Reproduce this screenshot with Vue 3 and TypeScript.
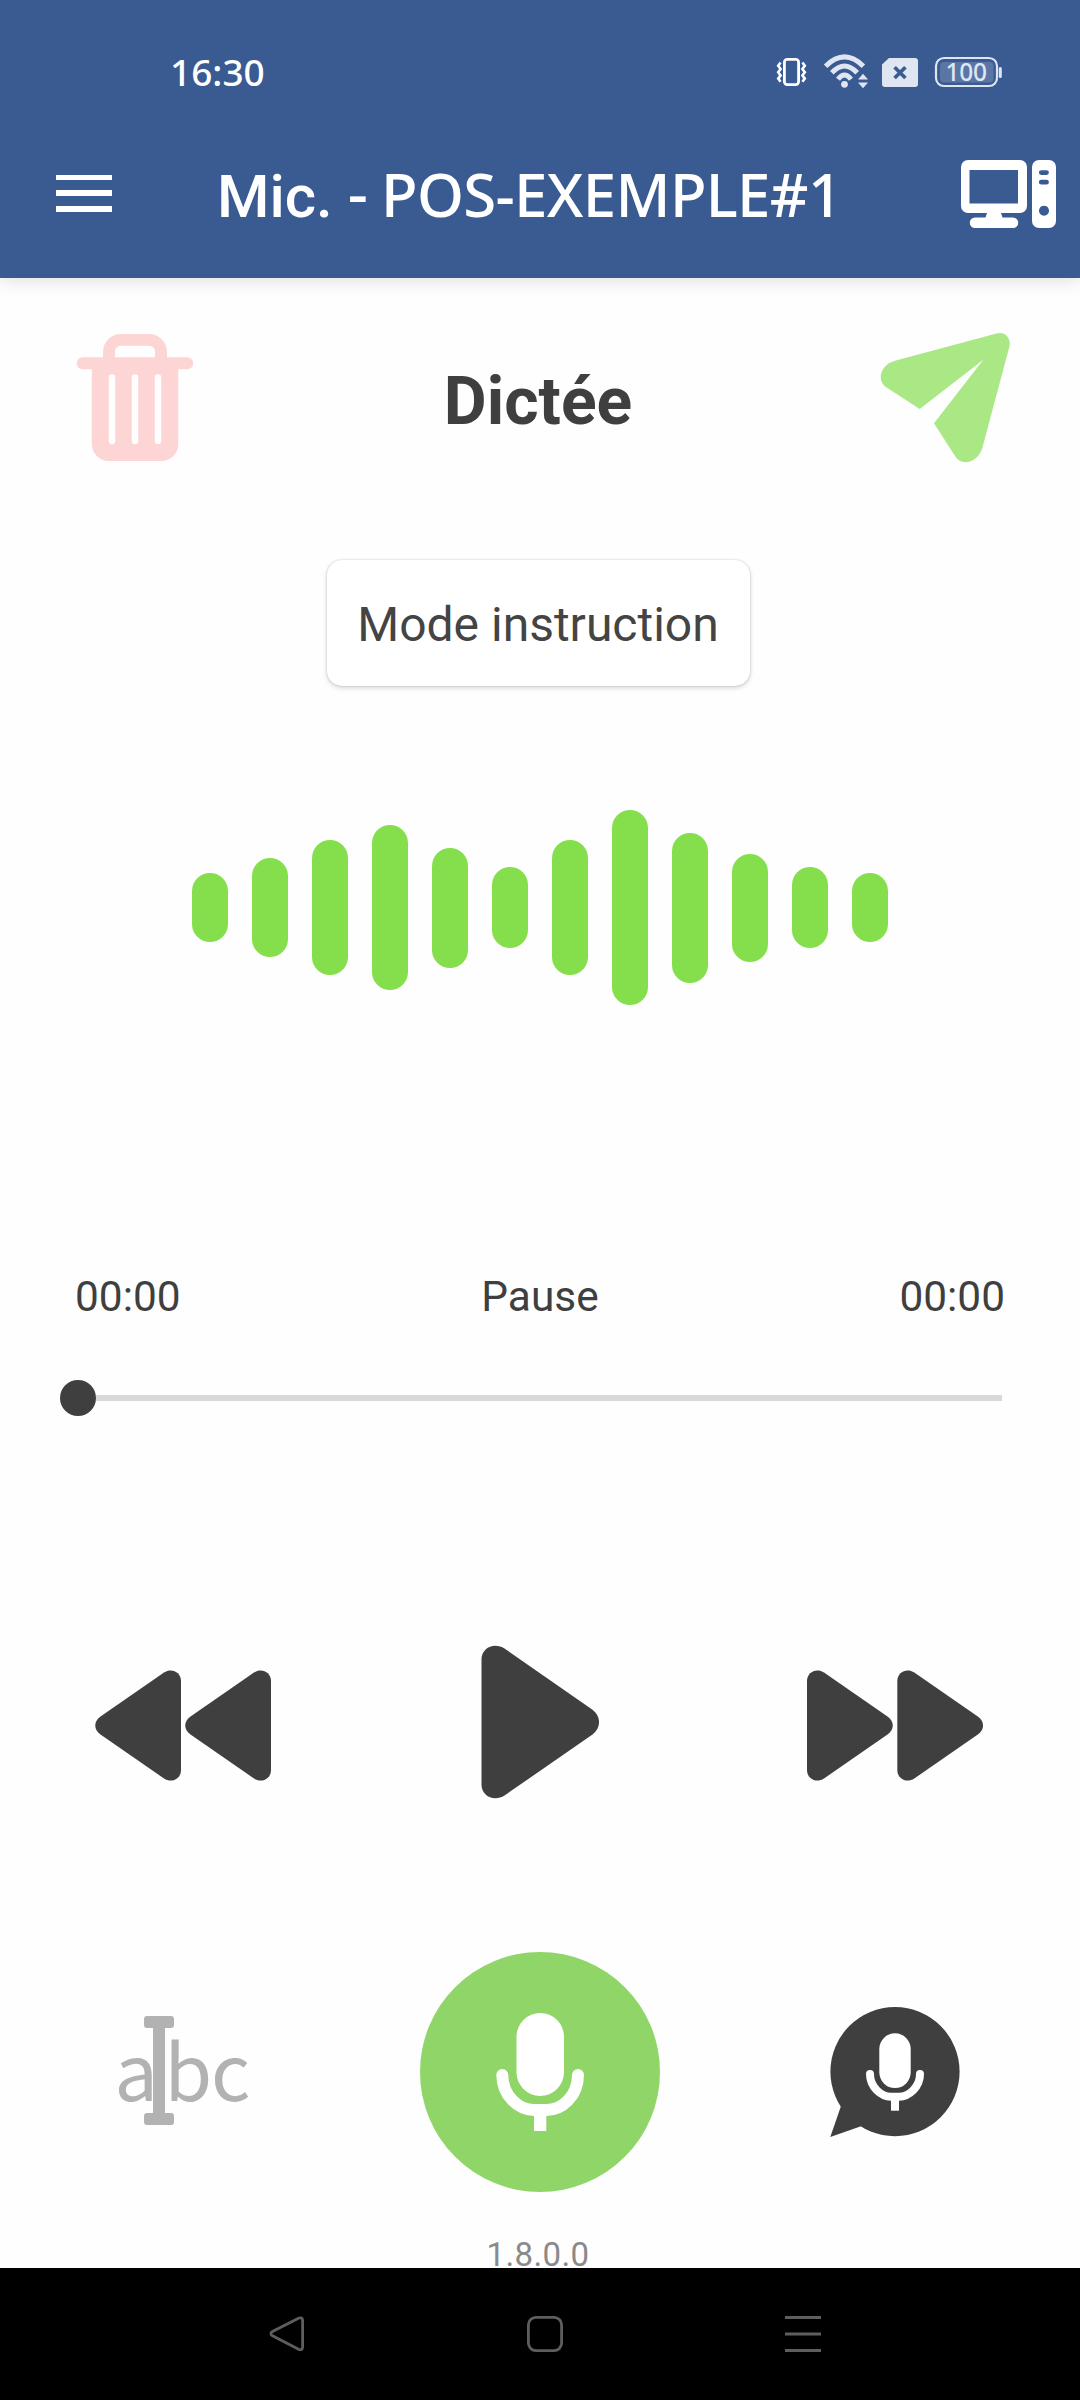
<script setup lang="ts">
import { ref } from 'vue'

const bars: number[] = [69, 99, 135, 165, 120, 81, 135, 195, 150, 108, 81, 69]
const position = ref('00:00')
const duration = ref('00:00')
const state = ref('Pause')
</script>

<template>
  <div class="screen">
    <header class="header">
      <div class="status">
        <span class="clock">16:30</span>
        <svg class="status-icons" viewBox="770 50 240 44" width="240" height="44">
          <g fill="none" stroke="#fff">
            <rect x="784.4" y="59.4" width="14.2" height="25.2" rx="2.8" stroke-width="2.8" />
            <path d="M780.6 62.5l-2.4 3.3 2.4 3.2-2.4 3.2 2.4 3.2-2.4 3.2 2.4 3.2M802.4 62.5l2.4 3.3-2.4 3.2 2.4 3.2-2.4 3.2 2.4 3.2-2.4 3.2" stroke-width="2.6" />
          </g>
          <g fill="none" stroke="#dfe5f1" stroke-width="5">
            <path d="M825.6 66.2Q844.5 47.6 863.4 66.2" />
            <path d="M831.8 72.8Q844.5 59 857.2 72.8" />
            <path d="M838 79.2Q844.5 70.6 851 79.2" />
          </g>
          <g fill="#dfe5f1">
            <circle cx="844.5" cy="84.3" r="3.4" />
            <path d="M858 79.6l5-5.8 5 5.8zM858 82.4h10l-5 5.8z" />
            <path d="M889 58h26a3 3 0 0 1 3 3v23a3 3 0 0 1-3 3h-30a3 3 0 0 1-3-3V64.6z" />
            <rect x="998.8" y="67" width="3" height="11" rx="1.5" />
          </g>
          <path d="M894.6 67.2l10.8 10.8M905.4 67.2l-10.8 10.8" stroke="#3a5a92" stroke-width="3.6" />
          <rect x="936" y="58" width="61" height="28" rx="8" fill="none" stroke="#dfe5f1" stroke-width="2.2" />
          <rect x="940" y="62" width="53.5" height="20.5" rx="4" fill="#5a76a6" />
          <text x="966.2" y="81" text-anchor="middle" class="battery-text">100</text>
        </svg>
      </div>
      <div class="toolbar">
        <svg class="menu" viewBox="56 175 56 38" width="56" height="38" fill="#fff">
          <path d="M56 175h56v5H56zM56 190h56v6H56zM56 206h56v6H56z" />
        </svg>
        <h1 class="title"><span class="t1">Mic. -</span><span class="t2">POS-EXEMPLE#1</span></h1>
        <svg class="pc" viewBox="960 160 96 68" width="96" height="68" fill="#fff">
          <path fill-rule="evenodd" d="M967 160h53a7 7 0 0 1 7 7v39a7 7 0 0 1-7 7h-19l1.5 4.5h10.5a5.2 5.2 0 0 1 0 10.5h-38a5.2 5.2 0 0 1 0-10.5h10.5l1.5-4.5h-19a7 7 0 0 1-7-7v-39a7 7 0 0 1 7-7zM969.5 170v33.5h48.500V170z" />
          <path fill-rule="evenodd" d="M1039 160h10a7 7 0 0 1 7 7v54a7 7 0 0 1-7 7h-10a7 7 0 0 1-7-7v-54a7 7 0 0 1 7-7zM1041.300 170.200a2.400 2.400 0 0 0 0 4.800h5.200a2.400 2.400 0 0 0 0-4.800zM1041.300 179.800a2.400 2.400 0 0 0 0 4.800h5.200a2.400 2.400 0 0 0 0-4.800zM1044 205.700a5 5 0 1 0 .01 0z" />
        </svg>
      </div>
    </header>

    <main class="body">
      <section class="heading">
        <svg viewBox="76 332 118 130" width="118" height="130">
          <path fill="#fdd5d5" fill-rule="evenodd" d="M82.700 357.300H103V352a18 18 0 0 1 18-18h28a18 18 0 0 1 18 18v5.300h20.200a6 6 0 0 1 0 12H178.300V444a17 17 0 0 1-17 17h-52.500a17 17 0 0 1-17-17V369.300H82.700a6 6 0 0 1 0-12zM115 357.300h40v-6a5.500 5.500 0 0 0-5.500-5.500h-29a5.500 5.500 0 0 0-5.500 5.500z" />
          <path d="M112 377.500v63.500M135 377.500v63.500M158 377.500v63.500" stroke="#fefefe" stroke-width="6.500" stroke-linecap="round" />
        </svg>
        <h2 class="mode-title">Dictée</h2>
        <svg viewBox="880 332 131 131" width="131" height="131">
          <path fill="#a9e884" d="M996.500 333.600C1005 331 1011.500 338.500 1009.300 347L982.300 448C978.500 461 962.500 468 955 456L934 423.300L983.300 359.700L919.700 409L887 387.800C875.500 380.500 881 365 894 361z" />
        </svg>
      </section>

      <button class="mode-button" type="button">Mode instruction</button>

      <div class="wave">
        <span v-for="(h, i) in bars" :key="i" class="bar" :style="{ height: h + 'px' }"></span>
      </div>

      <div class="times">
        <span>{{ position }}</span>
        <span class="state">{{ state }}</span>
        <span class="end">{{ duration }}</span>
      </div>

      <div class="slider">
        <span class="thumb"></span>
        <span class="track"></span>
      </div>

      <div class="controls">
        <svg viewBox="95 1670 176 111" width="176" height="111" fill="#3f3f3f">
          <path d="M181 1681V1770C181 1779 171.500 1783.500 164 1778.500L100.500 1734.500C93.500 1729.500 93.500 1721.500 100.500 1716.500L164 1672.500C171.500 1667.500 181 1672 181 1681z" />
          <path d="M181 1681V1770C181 1779 171.500 1783.500 164 1778.500L100.500 1734.500C93.500 1729.500 93.500 1721.500 100.500 1716.500L164 1672.500C171.500 1667.500 181 1672 181 1681z" transform="translate(90 0)" />
        </svg>
        <svg class="play" viewBox="481 1645 118 154" width="118" height="154" fill="#3f3f3f">
          <path d="M481.500 1659.500V1784.500C481.500 1796.500 494.500 1802 504.500 1795.500L592.500 1734.500C601.200 1728.500 601.200 1716 592.500 1709.800L504.500 1648.500C494.500 1642 481.500 1647.500 481.500 1659.500z" />
        </svg>
        <svg viewBox="807 1670 176 111" width="176" height="111" fill="#3f3f3f">
          <path d="M807 1681V1770C807 1779 816.500 1783.500 824 1778.500L887.500 1734.500C894.500 1729.500 894.500 1721.500 887.500 1716.500L824 1672.500C816.500 1667.500 807 1672 807 1681z" />
          <path d="M807 1681V1770C807 1779 816.500 1783.500 824 1778.500L887.500 1734.500C894.500 1729.500 894.500 1721.500 887.500 1716.500L824 1672.500C816.500 1667.500 807 1672 807 1681z" transform="translate(90.300 0)" />
        </svg>
      </div>

      <div class="actions">
        <svg viewBox="114 2012 138 120" width="138" height="120" fill="#b2b2b2">
          <text y="2100.500" class="abc"><tspan x="114.500">a</tspan><tspan x="164.500">b</tspan><tspan x="211">c</tspan></text>
          <path d="M147 2016h24a3 3 0 0 1 3 3v6a3 3 0 0 1-3 3h-6v85h6a3 3 0 0 1 3 3v6a3 3 0 0 1-3 3h-24a3 3 0 0 1-3-3v-6a3 3 0 0 1 3-3h6v-85h-6a3 3 0 0 1-3-3v-6a3 3 0 0 1 3-3z" />
        </svg>
        <svg class="record" viewBox="420 1952 240 240" width="240" height="240">
          <circle cx="540" cy="2072" r="120" fill="#8fd568" />
          <rect x="516.500" y="2013" width="47.500" height="83" rx="23.700" fill="#fff" />
          <path d="M502.300 2075C502.300 2096 519 2110 534 2110h12.500C562 2110 578 2096 578 2075" fill="none" stroke="#fff" stroke-width="12" stroke-linecap="round" />
          <path d="M534 2110h12.300v21H534z" fill="#fff" />
        </svg>
        <svg viewBox="830 2006 130 132" width="130" height="132">
          <circle cx="895" cy="2071.600" r="64.600" fill="#3f3f3f" />
          <path d="M841 2106L830.300 2137L861 2126.300L870 2100z" fill="#3f3f3f" />
          <rect x="879.300" y="2033.300" width="31.400" height="54.700" rx="15.700" fill="#fff" />
          <path d="M870 2074C870 2087 881 2096.700 891 2096.700h8C909 2096.700 920 2087 920 2074" fill="none" stroke="#fff" stroke-width="8" stroke-linecap="round" />
          <path d="M891 2096h8v14.700h-8z" fill="#fff" />
        </svg>
      </div>

      <div class="version">1.8.0.0</div>
    </main>

    <nav class="navbar">
      <svg viewBox="268 2314 38 40" width="38" height="40" fill="none" stroke="#5e5e5e" stroke-width="2.800">
        <path d="M298.500 2318.200L272.500 2331.500Q269.300 2333.600 272.500 2335.800L298.500 2349.300Q302.600 2350.800 302.600 2347V2320.500Q302.600 2316.700 298.500 2318.200z" />
      </svg>
      <svg viewBox="526 2314 38 40" width="38" height="40" fill="none" stroke="#5e5e5e" stroke-width="2.800">
        <rect x="528.400" y="2317.400" width="33.200" height="33.200" rx="7.500" />
      </svg>
      <svg viewBox="784 2314 38 40" width="38" height="40" fill="#5e5e5e">
        <path d="M785 2316h36v3h-36zM785 2332.500h36v3h-36zM785 2349h36v3h-36z" />
      </svg>
    </nav>
  </div>
</template>

<style>
html,
body {
  margin: 0;
  background: #fefefe;
}
</style>

<style scoped>
.screen {
  width: 1080px;
  height: 2400px;
  display: flex;
  flex-direction: column;
  overflow: hidden;
  background: #fefefe;
  font-family: Roboto, sans-serif;
  color: #3f3f3f;
}
svg {
  display: block;
  flex: none;
}
.header {
  position: relative;
  flex: none;
  box-sizing: border-box;
  height: 278px;
  background: #3a5a92;
  color: #fff;
  box-shadow: 0 2px 18px rgba(0, 0, 0, 0.13);
}
.status {
  box-sizing: border-box;
  height: 144px;
  padding: 50px 70px 0 170px;
  display: flex;
  justify-content: space-between;
  align-items: flex-start;
}
.clock {
  font: 500 37px/44px 'Noto Sans', sans-serif;
}
.battery-text {
  font: 500 24.5px 'Noto Sans', sans-serif;
  letter-spacing: -0.2px;
  fill: #dfe5f1;
}
.toolbar {
  height: 100px;
  padding: 0 24px 0 56px;
  display: flex;
  align-items: center;
}
.menu {
  margin-right: 105px;
}
.title {
  margin: 0;
  padding-top: 3px;
  flex: 1;
  display: flex;
  align-items: baseline;
  white-space: nowrap;
  line-height: 80px;
}
.t1 {
  width: 164px;
  font: 500 60px/80px Roboto, sans-serif;
}
.t2 {
  font: 500 60px/80px 'Noto Sans', sans-serif;
  letter-spacing: -0.7px;
}
.body {
  flex: none;
  height: 1990px;
  overflow: hidden;
  display: flex;
  flex-direction: column;
  align-items: center;
}
.body > * {
  flex: none;
}
.heading {
  box-sizing: border-box;
  width: 100%;
  height: 282px;
  padding: 54px 69px 0 76px;
  display: flex;
  justify-content: space-between;
  align-items: flex-start;
}
.mode-title {
  margin: 30px 0 0 2px;
  font-size: 66px;
  line-height: 80px;
  font-weight: 700;
}
.mode-button {
  box-sizing: border-box;
  width: 423px;
  height: 126px;
  margin-right: 3px;
  padding: 3px 1px 0 0;
  border: 0;
  border-radius: 15px;
  background: #fff;
  box-shadow: 0 0 2px rgba(0, 0, 0, 0.2), 0 2px 5px rgba(0, 0, 0, 0.16);
  font: 400 48px/60px Roboto, sans-serif;
  color: #444;
}
.wave {
  height: 195px;
  margin-top: 124px;
  display: flex;
  align-items: center;
  gap: 24px;
}
.bar {
  width: 36px;
  border-radius: 18px;
  background: #85df4d;
}
.times {
  box-sizing: border-box;
  width: 100%;
  height: 60px;
  margin-top: 262px;
  padding: 0 75px;
  display: grid;
  grid-template-columns: 1fr auto 1fr;
  font-size: 42.4px;
  line-height: 60px;
}
.end {
  text-align: right;
}
.slider {
  box-sizing: border-box;
  width: 100%;
  height: 36px;
  margin-top: 53px;
  padding: 0 78px 0 60px;
  display: flex;
  align-items: center;
}
.thumb {
  width: 36px;
  height: 36px;
  border-radius: 50%;
  background: #3f3f3f;
}
.track {
  flex: 1;
  height: 6px;
  background: #d9d9d9;
}
.controls {
  box-sizing: border-box;
  width: 100%;
  height: 154px;
  margin-top: 229px;
  padding: 0 97px 0 95px;
  display: flex;
  align-items: flex-start;
  justify-content: space-between;
}
.controls svg {
  margin-top: 25px;
}
.controls .play {
  margin: 0 0 0 2px;
}
.actions {
  box-sizing: border-box;
  width: 100%;
  height: 240px;
  margin-top: 153px;
  padding: 0 120px 0 114px;
  display: flex;
  align-items: center;
  justify-content: space-between;
}
.record {
  margin-right: 2px;
}
.abc {
  font: 400 77px 'Noto Sans CJK SC', sans-serif;
}
.version {
  margin: 50px 4px 0 0;
  font-size: 33px;
  line-height: 26px;
  letter-spacing: 0.4px;
  color: #8a8a8a;
}
.navbar {
  flex: none;
  box-sizing: border-box;
  height: 132px;
  padding: 0 258px 0 268px;
  display: flex;
  align-items: center;
  justify-content: space-between;
  background: #000;
}
</style>
